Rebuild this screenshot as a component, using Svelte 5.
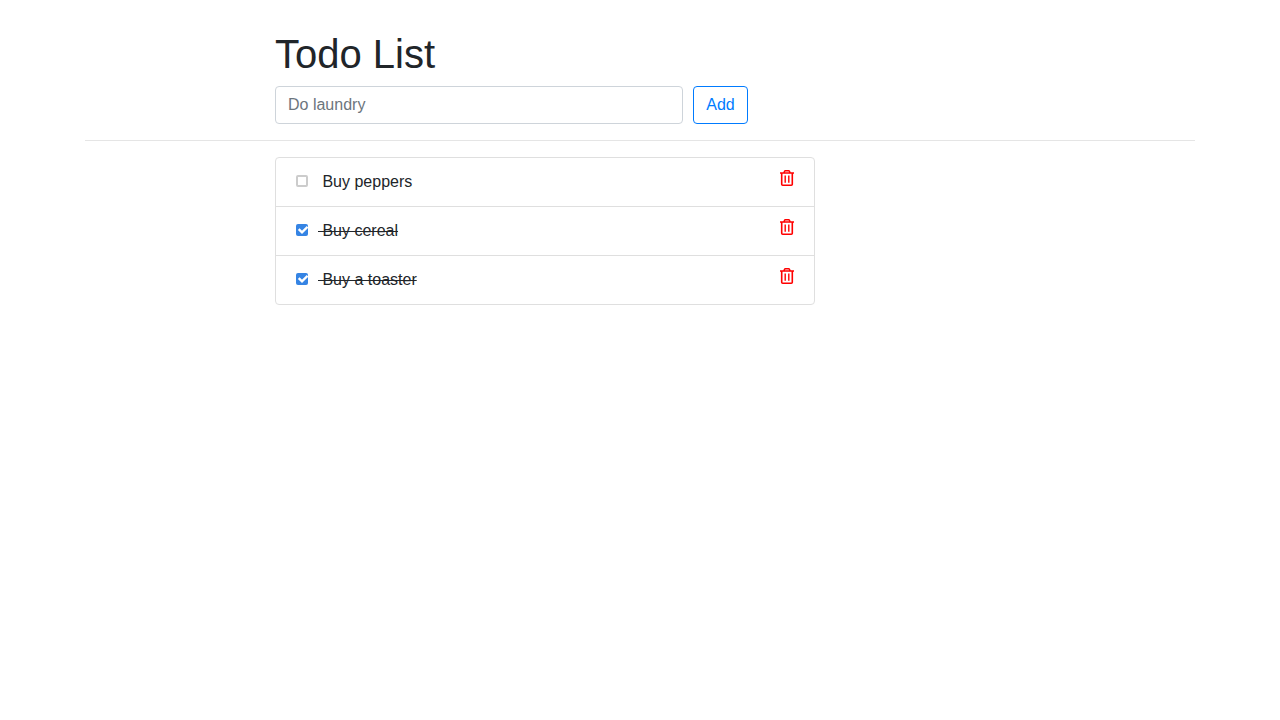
<script>
  let draft = $state('');
  let nextId = 4;
  let todos = $state([
    { id: 1, text: 'Buy peppers', done: false },
    { id: 2, text: 'Buy cereal', done: true },
    { id: 3, text: 'Buy a toaster', done: true }
  ]);

  function add(event) {
    event.preventDefault();
    const text = draft.trim();
    if (!text) return;
    todos.push({ id: nextId++, text, done: false });
    draft = '';
  }

  function remove(id) {
    todos = todos.filter((todo) => todo.id !== id);
  }
</script>

<main class="container">
  <header class="column">
    <h1>Todo List</h1>
    <form class="add-form" onsubmit={add}>
      <input class="field" type="text" placeholder="Do laundry" aria-label="New todo" bind:value={draft} />
      <button class="add" type="submit">Add</button>
    </form>
  </header>
  <hr />
  <ul class="column list">
    {#each todos as todo (todo.id)}
      <li class="item">
        <label class="todo">
          <input class="check" type="checkbox" bind:checked={todo.done} />
          <span class:done={todo.done}>&nbsp;{todo.text}</span>
        </label>
        <button class="remove" type="button" aria-label="Delete {todo.text}" onclick={() => remove(todo.id)}>
          <svg viewBox="0 0 14 16" width="14" height="16" fill="none" stroke="currentColor" aria-hidden="true">
            <path d="M0 3H14" stroke-width="1.5" />
            <path d="M3.9 3L4.6 1.3Q4.8 .8 5.4 .8H8.6Q9.2 .8 9.4 1.3L10.1 3" stroke-width="1.6" />
            <path d="M1.7 3V14.2Q1.7 15.2 2.7 15.2H11.3Q12.3 15.2 12.3 14.2V3" stroke-width="1.6" />
            <path d="M5.2 5.5V12.8M8.8 5.5V12.8" stroke-width="1.4" />
          </svg>
        </button>
      </li>
    {/each}
  </ul>
</main>

<style>
  :global(body) {
    background: #fff;
    color: #212529;
    font: 16px/24px "Liberation Sans", Arial, sans-serif;
  }

  * {
    box-sizing: border-box;
  }

  .container {
    max-width: 1140px;
    margin: 0 auto;
    padding: 30px 15px;
  }

  .column {
    max-width: 540px;
    margin-left: 190px;
  }

  h1 {
    margin: 0 0 8px;
    font-size: 40px;
    font-weight: 500;
    line-height: 48px;
  }

  .add-form {
    display: flex;
    gap: 10px;
    max-width: 473px;
  }

  .field {
    flex: 1;
    min-width: 0;
    padding: 6px 12px;
    border: 1px solid #ced4da;
    border-radius: 4px;
    background: #fff;
    color: #495057;
    font: inherit;
  }

  .field::placeholder {
    color: #6c757d;
    opacity: 1;
  }

  .add {
    min-width: 55px;
    padding: 6px 12px;
    border: 1px solid #007bff;
    border-radius: 4px;
    background: transparent;
    color: #007bff;
    font: inherit;
    cursor: pointer;
  }

  hr {
    margin: 16px 0;
    border: 0;
    border-top: 1px solid rgba(0, 0, 0, 0.1);
  }

  .list {
    margin-top: 0;
    margin-bottom: 0;
    padding: 0;
    border: 1px solid #dfdfdf;
    border-radius: 4px;
    list-style: none;
  }

  .item {
    display: flex;
    align-items: flex-start;
    justify-content: space-between;
    padding: 12px 20px;
  }

  .item + .item {
    border-top: 1px solid #dfdfdf;
  }

  .todo {
    display: flex;
    align-items: center;
    gap: 10px;
  }

  .check {
    appearance: none;
    width: 12px;
    height: 12px;
    margin: 0 0 2px;
    border: 2px solid #ccc;
    border-radius: 2px;
    background: #fff;
  }

  .check:checked {
    border: 0;
    background: #3584e4 url("data:image/svg+xml,%3Csvg xmlns='http://www.w3.org/2000/svg' viewBox='0 0 12 12'%3E%3Cpath d='M2.7 5.2L6 8.4L11.6 2.8' fill='none' stroke='white' stroke-width='2.4'/%3E%3C/svg%3E") center / 12px 12px no-repeat;
  }

  .done {
    text-decoration: line-through;
  }

  .remove {
    display: flex;
    padding: 0;
    border: 0;
    background: none;
    color: #f00;
    cursor: pointer;
  }
</style>
